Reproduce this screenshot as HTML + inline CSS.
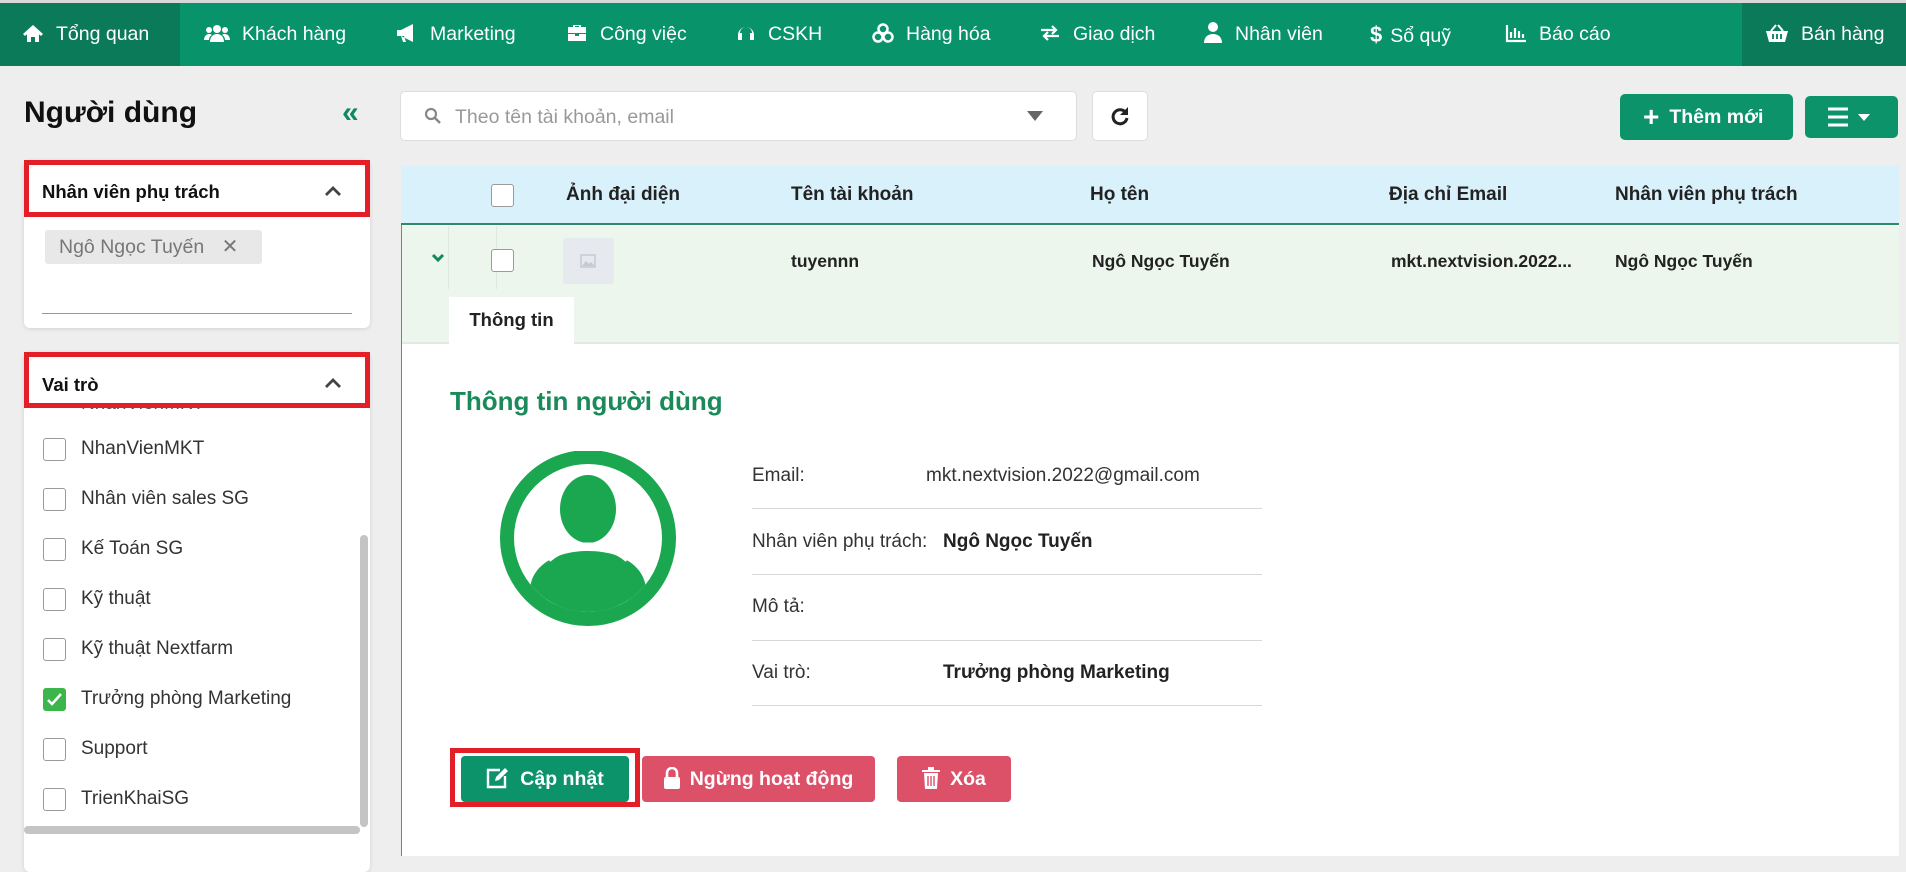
<!DOCTYPE html>
<html><head><meta charset="utf-8">
<style>
*{box-sizing:border-box;margin:0;padding:0}
body{width:1906px;height:856px;overflow:hidden;background:#eeeeee;font-family:"Liberation Sans",Arial,sans-serif;color:#222;position:relative}
.a{position:absolute}
.nav{left:0;top:0;width:1906px;height:66px;background:#08936a;border-top:3px solid #d8d8d8}
.ni{position:absolute;top:0;height:63px;line-height:63px;color:#fff;font-size:19.5px;white-space:nowrap}
.ni svg{vertical-align:-3px;margin-right:12px}
.panel{background:#fff;border-radius:6px;box-shadow:0 1px 4px rgba(0,0,0,.12)}
.red{border:5px solid #e41e26}
.cb{position:absolute;width:23px;height:23px;border:1px solid #9a9a9a;border-radius:3px;background:#fff}
.it{position:absolute;left:81px;font-size:19px;color:#333}
.th{position:absolute;top:184px;font-size:19px;font-weight:bold;color:#222}
.lbl{position:absolute;left:752px;font-size:19px;color:#333}
.val{position:absolute;font-size:19px;color:#222}
.hl{position:absolute;left:752px;width:510px;height:1px;background:#d8d8d8}
.btn{position:absolute;top:756px;height:46px;border-radius:4px;color:#fff;font-weight:bold;font-size:19.5px;line-height:46px;text-align:center}
</style></head><body>
<div class="a nav">
  <div class="a" style="left:0;top:0;width:180px;height:63px;background:#0b7a58"></div>
  <div class="a" style="left:1742px;top:0;width:164px;height:63px;background:#0b7a58"></div>
  <div class="ni" style="left:22px"><svg width="22" height="20" viewBox="0 0 22 20"><path d="M11 2L1 11l2 2 8-7 8 7 2-2z M5 11v8h4v-5h4v5h4v-8l-6-5z" fill="#fff"/></svg>Tổng quan</div>
  <div class="ni" style="left:204px"><svg width="26" height="20" viewBox="0 0 26 20"><circle cx="13" cy="6" r="4" fill="#fff"/><circle cx="5" cy="7" r="3" fill="#fff"/><circle cx="21" cy="7" r="3" fill="#fff"/><path d="M6 19c0-5 3-8 7-8s7 3 7 8z M0 17c0-3 2-6 5-6 1 0 2 0 3 1-2 1-3 3-3 5z M26 17c0-3-2-6-5-6-1 0-2 0-3 1 2 1 3 3 3 5z" fill="#fff"/></svg>Khách hàng</div>
  <div class="ni" style="left:396px"><svg width="22" height="20" viewBox="0 0 22 20"><path d="M1 7h4l12-6v18l-12-6H1z M5 13l2 6h3l-2-6z" fill="#fff"/></svg>Marketing</div>
  <div class="ni" style="left:566px"><svg width="22" height="20" viewBox="0 0 22 20"><path d="M7 4V2h8v2h5v6H2V4z M9 4h4V3H9z M2 11h7v2h4v-2h7v7H2z" fill="#fff"/></svg>Công việc</div>
  <div class="ni" style="left:736px"><svg width="20" height="20" viewBox="0 0 20 20"><path d="M2 12a8 8 0 0116 0v5h-4v-7h2a6 6 0 00-12 0h2v7H2z" fill="#fff"/></svg>CSKH</div>
  <div class="ni" style="left:872px"><svg width="22" height="20" viewBox="0 0 22 20"><circle cx="11" cy="6" r="4.5" fill="none" stroke="#fff" stroke-width="2.5"/><circle cx="6" cy="14" r="4.5" fill="none" stroke="#fff" stroke-width="2.5"/><circle cx="16" cy="14" r="4.5" fill="none" stroke="#fff" stroke-width="2.5"/></svg>Hàng hóa</div>
  <div class="ni" style="left:1039px"><svg width="22" height="20" viewBox="0 0 22 20"><path d="M2 7h15M13 3l4 4-4 4M20 13H5M9 9l-4 4 4 4" stroke="#fff" stroke-width="2.2" fill="none"/></svg>Giao dịch</div>
  <div class="ni" style="left:1203px"><svg width="20" height="22" viewBox="0 0 20 22"><circle cx="10" cy="6" r="5" fill="#fff"/><path d="M1 22c0-6 4-9 9-9s9 3 9 9z" fill="#fff"/></svg>Nhân viên</div>
  <div class="ni" style="left:1370px"><b style="font-size:22px;margin-right:8px">$</b>Sổ quỹ</div>
  <div class="ni" style="left:1505px"><svg width="22" height="20" viewBox="0 0 22 20"><path d="M2 2v16h19" stroke="#fff" stroke-width="2.2" fill="none"/><path d="M6 9v6M10 5v10M14 8v7M18 11v4" stroke="#fff" stroke-width="2.2"/></svg>Báo cáo</div>
  <div class="ni" style="left:1765px"><svg width="24" height="20" viewBox="0 0 24 20"><path d="M1 8h22l-3 11H4z" fill="#fff"/><path d="M6 8l5-6M18 8l-5-6" stroke="#fff" stroke-width="2"/><path d="M8 11v5M12 11v5M16 11v5" stroke="#0b7a58" stroke-width="1.8"/></svg>Bán hàng</div>
</div>

<div class="a" style="left:24px;top:96px;font-size:30px;font-weight:bold;color:#111">Người dùng</div>
<div class="a" style="left:342px;top:96px;font-size:30px;font-weight:bold;color:#0e8a5c;letter-spacing:-4px">«</div>

<div class="a panel" style="left:24px;top:160px;width:346px;height:168px"></div>
<div class="a red" style="left:24px;top:160px;width:346px;height:57px"></div>
<div class="a" style="left:42px;top:181px;font-size:18.5px;font-weight:bold;color:#111">Nhân viên phụ trách</div>
<svg class="a" style="left:323px;top:184px" width="20" height="14" viewBox="0 0 20 14"><path d="M3 11l7-7 7 7" stroke="#444" stroke-width="2.8" fill="none"/></svg>
<div class="a" style="left:45px;top:230px;width:217px;height:34px;background:#e8e8e8;border-radius:3px;font-size:19.5px;color:#777;line-height:34px;padding-left:14px">Ngô Ngọc Tuyến <span style="margin-left:12px;font-size:20px">✕</span></div>
<div class="a" style="left:42px;top:313px;width:310px;height:1px;background:#999"></div>

<div class="a panel" style="left:24px;top:352px;width:346px;height:520px"></div>
<div class="a" style="left:30px;top:408px;width:334px;height:448px;overflow:hidden">
  <div class="a" style="left:51px;top:-15px;font-size:19px;color:#555">NhanVienMKT</div>
  <div class="cb" style="left:13px;top:30px"></div><div class="it" style="left:51px;top:30px">NhanVienMKT</div>
  <div class="cb" style="left:13px;top:80px"></div><div class="it" style="left:51px;top:80px">Nhân viên sales SG</div>
  <div class="cb" style="left:13px;top:130px"></div><div class="it" style="left:51px;top:130px">Kế Toán SG</div>
  <div class="cb" style="left:13px;top:180px"></div><div class="it" style="left:51px;top:180px">Kỹ thuật</div>
  <div class="cb" style="left:13px;top:230px"></div><div class="it" style="left:51px;top:230px">Kỹ thuật Nextfarm</div>
  <div class="cb" style="left:13px;top:280px;background:#3cb54a;border-color:#3cb54a"><svg width="21" height="21" viewBox="0 0 21 21"><path d="M4 11l4 4 9-10" stroke="#fff" stroke-width="2.5" fill="none"/></svg></div><div class="it" style="left:51px;top:280px">Trưởng phòng Marketing</div>
  <div class="cb" style="left:13px;top:330px"></div><div class="it" style="left:51px;top:330px">Support</div>
  <div class="cb" style="left:13px;top:380px"></div><div class="it" style="left:51px;top:380px">TrienKhaiSG</div>
</div>
<div class="a" style="left:24px;top:352px;width:346px;height:56px;background:#fff"></div>
<div class="a red" style="left:24px;top:352px;width:346px;height:56px"></div>
<div class="a" style="left:42px;top:374px;font-size:18.5px;font-weight:bold;color:#111">Vai trò</div>
<svg class="a" style="left:323px;top:376px" width="20" height="14" viewBox="0 0 20 14"><path d="M3 11l7-7 7 7" stroke="#444" stroke-width="2.8" fill="none"/></svg>
<div class="a" style="left:360px;top:535px;width:8px;height:292px;background:#c4c4c4;border-radius:4px"></div>
<div class="a" style="left:24px;top:826px;width:336px;height:8px;background:#c4c4c4;border-radius:4px"></div>

<div class="a" style="left:400px;top:91px;width:677px;height:50px;background:#fff;border:1px solid #ddd;border-radius:5px"></div>
<svg class="a" style="left:424px;top:107px" width="18" height="18" viewBox="0 0 18 18"><circle cx="7" cy="7" r="5" stroke="#888" stroke-width="2.2" fill="none"/><path d="M11 11l5 5" stroke="#888" stroke-width="2.5"/></svg>
<div class="a" style="left:455px;top:106px;font-size:19.5px;color:#999">Theo tên tài khoản, email</div>
<svg class="a" style="left:1027px;top:111px" width="16" height="10"><path d="M0 0h16L8 10z" fill="#666"/></svg>
<div class="a" style="left:1092px;top:91px;width:56px;height:50px;background:#fff;border:1px solid #ddd;border-radius:5px"></div>
<svg class="a" style="left:1110px;top:106px" width="20" height="20" viewBox="0 0 20 20"><path d="M16 7A7 7 0 1017 12" stroke="#222" stroke-width="3" fill="none"/><path d="M18 1v8h-8z" fill="#222"/></svg>
<div class="a" style="left:1620px;top:94px;width:173px;height:46px;background:#0d936a;border-radius:5px;color:#fff;font-weight:bold;font-size:19.5px;line-height:46px;padding-left:23px"><span style="font-size:28px;vertical-align:-3px;margin-right:10px">+</span>Thêm mới</div>
<div class="a" style="left:1805px;top:96px;width:93px;height:42px;background:#0d936a;border-radius:5px"></div>
<svg class="a" style="left:1828px;top:107px" width="46" height="20"><path d="M0 2h20M0 10h20M0 18h20" stroke="#fff" stroke-width="3"/><path d="M30 7h12l-6 7z" fill="#fff"/></svg>

<div class="a" style="left:401px;top:166px;width:1498px;height:690px;background:#fff;border-left:1px solid #3aa56a"></div>
<div class="a" style="left:401px;top:166px;width:1498px;height:59px;background:#d8f1fa;border-bottom:2px solid #2a8a6a"></div>
<div class="cb" style="left:491px;top:184px"></div>
<div class="th" style="left:566px">Ảnh đại diện</div>
<div class="th" style="left:791px">Tên tài khoản</div>
<div class="th" style="left:1090px">Họ tên</div>
<div class="th" style="left:1389px">Địa chỉ Email</div>
<div class="th" style="left:1615px">Nhân viên phụ trách</div>
<div class="a" style="left:402px;top:226px;width:1497px;height:118px;background:#edf6ec;border-bottom:2px solid #e2e8e2"></div>
<div class="a" style="left:448px;top:226px;width:1px;height:63px;background:#dfe8df"></div>
<div class="a" style="left:496px;top:226px;width:1px;height:63px;background:#dfe8df"></div>
<svg class="a" style="left:431px;top:253px" width="14" height="10"><path d="M2 2l5 5 5-5" stroke="#0e8a5c" stroke-width="3" fill="none"/></svg>
<div class="cb" style="left:491px;top:249px"></div>
<div class="a" style="left:563px;top:238px;width:51px;height:46px;background:#e6eaee;border-radius:3px"></div>
<svg class="a" style="left:580px;top:254px" width="16" height="14"><rect x="1" y="1" width="14" height="12" fill="none" stroke="#c5cad0" stroke-width="1.5"/><path d="M2 12l4-5 3 3 2-2 4 4z" fill="#c5cad0"/></svg>
<div class="a" style="left:791px;top:251px;font-size:17.5px;font-weight:bold">tuyennn</div>
<div class="a" style="left:1092px;top:251px;font-size:17.5px;font-weight:bold">Ngô Ngọc Tuyến</div>
<div class="a" style="left:1391px;top:251px;font-size:17.5px;font-weight:bold">mkt.nextvision.2022...</div>
<div class="a" style="left:1615px;top:251px;font-size:17.5px;font-weight:bold">Ngô Ngọc Tuyến</div>
<div class="a" style="left:449px;top:297px;width:125px;height:49px;background:#fff;font-size:18.5px;font-weight:bold;line-height:46px;text-align:center">Thông tin</div>

<div class="a" style="left:450px;top:386px;font-size:26px;font-weight:bold;color:#1a8a5a">Thông tin người dùng</div>
<svg class="a" style="left:500px;top:451px" width="176" height="176" viewBox="0 0 176 176"><defs><clipPath id="c"><circle cx="88" cy="87" r="74"/></clipPath></defs><circle cx="88" cy="87" r="81" fill="none" stroke="#1aa74f" stroke-width="14"/><ellipse cx="88" cy="58" rx="28" ry="34" fill="#1aa74f"/><g clip-path="url(#c)"><path d="M30 180V140c0-24 24-40 58-40s58 16 58 40v40z" fill="#1aa74f"/></g><path d="M48 108c12-10 24-13 40-13s28 3 40 13" stroke="#fff" stroke-width="7" fill="none"/></svg>

<div class="lbl" style="top:465px">Email:</div><div class="val" style="left:926px;top:465px;color:#333">mkt.nextvision.2022@gmail.com</div>
<div class="hl" style="top:508px"></div>
<div class="lbl" style="top:531px">Nhân viên phụ trách:</div><div class="val" style="left:943px;top:531px;font-weight:bold">Ngô Ngọc Tuyến</div>
<div class="hl" style="top:574px"></div>
<div class="lbl" style="top:596px">Mô tả:</div>
<div class="hl" style="top:640px"></div>
<div class="lbl" style="top:662px">Vai trò:</div><div class="val" style="left:943px;top:662px;font-weight:bold">Trưởng phòng Marketing</div>
<div class="hl" style="top:705px"></div>

<div class="a" style="left:450px;top:748px;width:190px;height:59px;border:5px solid #e41e26"></div>
<div class="btn" style="left:461px;width:168px;background:#0d936a"><svg width="24" height="22" viewBox="0 0 24 22" style="vertical-align:-4px;margin-right:10px"><path d="M14 3H2v17h17V9" stroke="#fff" stroke-width="2.4" fill="none"/><path d="M9 14l1-4 9-9 3 3-9 9z" fill="#fff"/></svg>Cập nhật</div>
<div class="btn" style="left:642px;width:233px;background:#dc5068"><svg width="16" height="22" viewBox="0 0 16 22" style="vertical-align:-4px;margin-right:10px"><path d="M3 10V6a5 5 0 0110 0v4" stroke="#fff" stroke-width="2.6" fill="none"/><rect x="0" y="10" width="16" height="12" rx="2" fill="#fff"/></svg>Ngừng hoạt động</div>
<div class="btn" style="left:897px;width:114px;background:#dc5068"><svg width="18" height="22" viewBox="0 0 18 22" style="vertical-align:-4px;margin-right:10px"><path d="M0 3h18v2H0z M6 0h6v3H6z M2 6h14l-1 16H3z" fill="#fff"/><path d="M6 9v10M9 9v10M12 9v10" stroke="#dc5068" stroke-width="1.4"/></svg>Xóa</div>
</body></html>
